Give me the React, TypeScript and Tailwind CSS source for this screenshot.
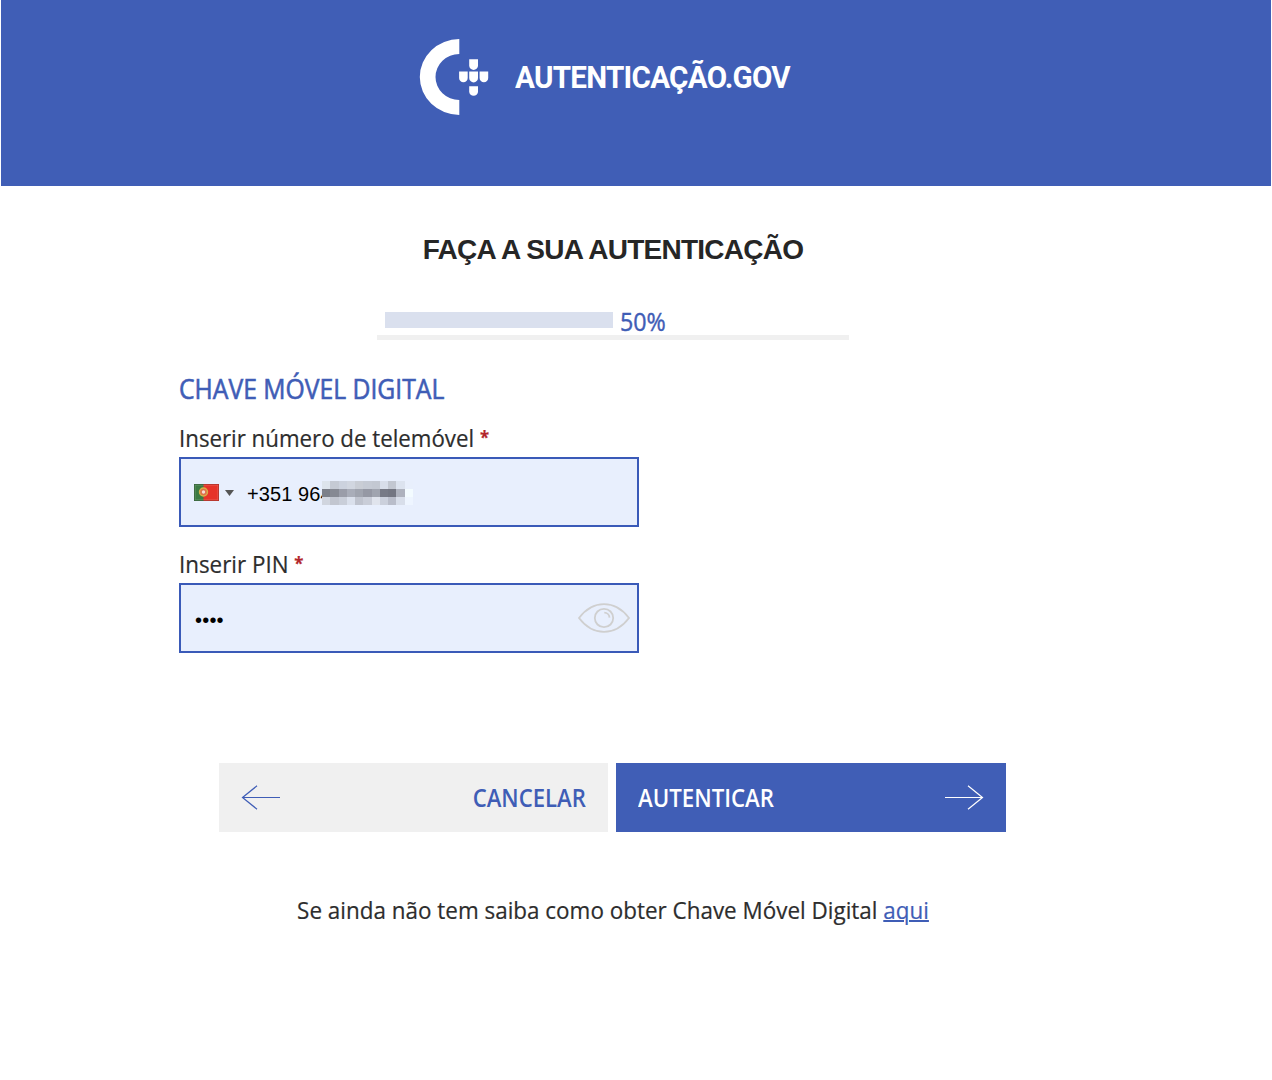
import { useState } from "react";

// Tones of the obscured digits, one entry per column: top, middle, bottom
const maskColumns = [
  ["#dde4ec", "#7b7f89", "#d0d5df"],
  ["#c5cad4", "#868993", "#c2c6d0"],
  ["#ccd2de", "#9a9da9", "#c9ced9"],
  ["#d1d6e0", "#a9adb9", "#dae0ec"],
  ["#c9cdd5", "#a0a4af", "#bfc3ce"],
  ["#c5cad4", "#9598a4", "#c9cdd8"],
  ["#c3c8d2", "#a0a4af", "#e0e4ed"],
  ["#d8deea", "#777a86", "#cbd0dc"],
  ["#c2c7d1", "#737682", "#b9bdca"],
  ["#dce3ef", "#aeb2be", "#d8deea"],
  ["#e8effc", "#f3fbff", "#eef5ff"],
];

const Logo = () => (
  <svg className="h-[76px] w-[70px]" viewBox="0 0 70 76" fill="#fff">
    <path d="M40.300 0v15A23.800 23 0 0 0 40.300 61v15A39.500 38 0 0 1 40.300 0z" />
    <path d="M50.200 20.300h8.800v6.200a4.400 4.400 0 0 1-8.800 0z" />
    <path d="M40.100 32.600h8.600v6.400a4.300 4.300 0 0 1-8.600 0z" />
    <path d="M50.200 32.600h8.800v6.400a4.400 4.400 0 0 1-8.800 0z" />
    <path d="M60.600 32.600h8.600v6.400a4.300 4.300 0 0 1-8.600 0z" />
    <path d="M50.200 47.200h8.800v5.200a4.400 4.400 0 0 1-8.800 0z" />
  </svg>
);

const Flag = () => (
  <svg className="h-[17px] w-[25px]" viewBox="0 0 25 17">
    <rect width="25" height="17" fill="#e63329" />
    <rect width="9.5" height="17" fill="#3c7a42" />
    <rect x="1" y="1" width="23" height="15" fill="none" stroke="#fff" strokeOpacity=".2" />
    <rect x=".5" y=".5" width="24" height="16" fill="none" stroke="#000" strokeOpacity=".2" />
    <circle cx="9.5" cy="8" r="4" fill="#e0704a" stroke="#d9b048" strokeWidth="1.4" />
    <circle cx="9.5" cy="8" r="1.7" fill="#f6dcd3" />
  </svg>
);

const Eye = () => (
  <svg
    className="h-[30px] w-[52px]"
    viewBox="0 0 52 30"
    fill="none"
    stroke="#cfcfcf"
    strokeWidth="1.8"
  >
    <path d="M1 15C15 -3.5 37 -3.5 51 15C37 33.500 15 33.500 1 15z" />
    <circle cx="26" cy="15" r="9.200" />
    <path d="M26.300 9.600c2.800 0 5 2.200 5.200 5" />
  </svg>
);

const Arrow = ({ className }: { className?: string }) => (
  <svg
    className={`h-[26px] w-10 ${className || ""}`}
    viewBox="0 0 40 26"
    fill="none"
    stroke="currentColor"
    strokeWidth="1.2"
  >
    <path d="M1 12.500h37.500M24 .8l14.500 11.700L24 24.200" />
  </svg>
);

const Required = () => (
  <span className="-mt-px inline-block align-top text-[18px] font-bold text-[#b3262c]">*</span>
);

const App = () => {
  const [pin, setPin] = useState("1234");

  return (
    <div className="min-h-[1080px] bg-white px-px font-['Open_Sans',sans-serif] text-[#2d2d2d]">
      <header className="flex h-[186px] items-start bg-[#405eb6] pt-[39px] pl-[418px]">
        <Logo />
        <span className="mt-[17px] ml-[26px] origin-left scale-x-[0.925] whitespace-nowrap font-['Roboto',sans-serif] text-[32px] leading-[42px] font-bold tracking-[-0.78px] text-white">
          AUTENTICAÇÃO.GOV
        </span>
      </header>

      <main className="ml-[178px] w-[868px]">
        <h1 className="pt-[44px] text-center font-['Liberation_Sans',sans-serif] text-[28px] leading-10 font-bold tracking-[-0.74px] whitespace-nowrap text-[#262626]">
          FAÇA A SUA AUTENTICAÇÃO
        </h1>

        <div className="mx-auto mt-[35px] flex h-[35px] w-[472px] items-start border-b-[5px] border-[#f0f0f0] pl-2">
          <div className="mt-[7px] h-4 w-[228px] bg-[#dae0ee]" />
          <span className="ml-[7px] origin-left scale-x-[0.93] text-[25px] leading-[33px] text-[#3f5db6] [-webkit-text-stroke:0.4px]">
            50%
          </span>
        </div>

        <form onSubmit={(e) => e.preventDefault()}>
          <h2 className="mt-[31px] origin-left scale-x-[0.915] text-[27px] leading-9 text-[#3f5db6] [-webkit-text-stroke:0.6px]">
            CHAVE MÓVEL DIGITAL
          </h2>

          <label className="mt-[15px] block origin-left scale-x-[0.928] text-2xl leading-8 [-webkit-text-stroke:0.2px]">
            Inserir número de telemóvel <Required />
          </label>
          <div className="mt-[3px] flex h-[70px] w-[460px] items-center border-2 border-[#3a5ab8] bg-[#e8effd] pl-[13px]">
            <Flag />
            <svg className="mt-px ml-[6px] h-[6px] w-[9px]" viewBox="0 0 9 6">
              <path d="M0 0h9L4.500 6z" fill="#555" />
            </svg>
            <span className="mt-[3px] ml-[13px] w-[84px] font-['Liberation_Sans',sans-serif] text-xl leading-6 tracking-[0.1px] whitespace-nowrap text-black">
              +351 964
            </span>
            <div className="relative mt-[2px] -ml-[9px] grid h-[25px] w-[91px] grid-cols-11">
              {maskColumns.map((tones, i) => (
                <div key={i} className="grid grid-rows-3">
                  {tones.map((tone, j) => (
                    <div key={j} style={{ backgroundColor: tone }} />
                  ))}
                </div>
              ))}
            </div>
          </div>

          <label
            htmlFor="pin"
            className="mt-[21px] block origin-left scale-x-[0.932] text-2xl leading-8 [-webkit-text-stroke:0.2px]"
          >
            Inserir PIN <Required />
          </label>
          <div className="mt-[3px] flex h-[70px] w-[460px] items-center border-2 border-[#3a5ab8] bg-[#e8effd] pr-[7px] pl-[14px]">
            <input
              id="pin"
              type="password"
              value={pin}
              onChange={(e) => setPin(e.target.value)}
              className="mt-[3px] min-w-0 flex-1 bg-transparent font-['Liberation_Sans',sans-serif] text-xl tracking-[0.2px] text-black outline-none"
            />
            <Eye />
          </div>

          <div className="mt-[110px] ml-10 flex gap-2">
            <button
              type="button"
              className="flex h-[69px] w-[389px] items-center justify-between bg-[#f0f0f0] px-[22px] text-[25px] font-semibold text-[#3f5db6]"
            >
              <Arrow className="-mt-px rotate-180" />
              <span className="mt-px origin-right scale-x-[0.885]">CANCELAR</span>
            </button>
            <button
              type="submit"
              className="flex h-[69px] w-[390px] items-center justify-between bg-[#405eb6] px-[22px] text-[25px] font-semibold text-white"
            >
              <span className="mt-px origin-left scale-x-[0.89]">AUTENTICAR</span>
              <Arrow />
            </button>
          </div>
        </form>

        <p className="mt-[60px] scale-x-[0.935] text-center text-2xl leading-9 whitespace-nowrap [-webkit-text-stroke:0.2px]">
          Se ainda não tem saiba como obter Chave Móvel Digital{" "}
          <a href="#" className="text-[#3f5db6] underline decoration-2">
            aqui
          </a>
        </p>
      </main>
    </div>
  );
};

export default App;
